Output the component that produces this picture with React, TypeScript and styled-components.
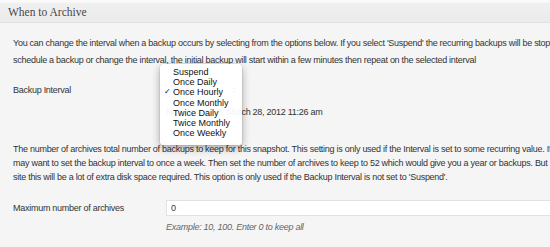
import styled, { createGlobalStyle } from "styled-components";

const GlobalStyle = createGlobalStyle`
  html, body {
    margin: 0;
    padding: 0;
    background: #f5f5f5;
    overflow: hidden;
  }
  body {
    font-family: "Liberation Sans", Arial, sans-serif;
    color: #333;
  }
`;

const intervals = [
  "Suspend",
  "Once Daily",
  "Once Hourly",
  "Once Monthly",
  "Twice Daily",
  "Twice Monthly",
  "Once Weekly",
];

export default function App() {
  const selected = "Once Hourly";

  return (
    <>
      <GlobalStyle />
      <Panel>
        <Header>When to Archive</Header>
        <Body>
          <Intro>
            You can change the interval when a backup occurs by selecting from the options below. If you select
            'Suspend' the recurring backups will be stopped. When you
            <br />
            schedule a backup or change the interval, the initial backup will start within a few minutes then
            repeat on the selected interval
          </Intro>

          <IntervalRow>
            <Label>Backup Interval</Label>
            <Field>
              <SelectBox>
                <span>Once Hourly</span>
                <Stepper viewBox="0 0 6 10">
                  <path d="M1 4 L3 1.5 L5 4 Z M1 6 L3 8.5 L5 6 Z" fill="#888" />
                </Stepper>
              </SelectBox>
              <Menu>
                {intervals.map((name) => (
                  <MenuItem key={name} $checked={name === selected}>
                    {name}
                  </MenuItem>
                ))}
              </Menu>
              <NextRun>Next backup at: March 28, 2012 11:26 am</NextRun>
            </Field>
          </IntervalRow>

          <Note>
            The number of archives total number of backups to keep for this snapshot. This setting is only used if
            the Interval is set to some recurring value. If you
            <br />
            may want to set the backup interval to once a week. Then set the number of archives to keep to 52 which
            would give you a year or backups. But if you have a large
            <br />
            site this will be a lot of extra disk space required. This option is only used if the Backup Interval is
            not set to 'Suspend'.
          </Note>

          <FieldRow>
            <Label>Maximum number of archives</Label>
            <Field>
              <Input defaultValue="0" />
              <Hint>Example: 10, 100. Enter 0 to keep all</Hint>
            </Field>
          </FieldRow>
        </Body>
      </Panel>
    </>
  );
}

const Panel = styled.div`
  width: 700px;
  border-top: 2px solid #fafafa;
`;

const Header = styled.h3`
  margin: 0;
  height: 20px;
  padding: 0 8px;
  line-height: 20px;
  font-family: "Liberation Serif", "Times New Roman", serif;
  font-size: 11.5px;
  font-weight: normal;
  color: #464646;
  background: linear-gradient(#f0f0f0, #ebebeb);
  border-bottom: 1px solid #e2e2e2;
  box-shadow: inset 0 1px 0 #f7f7f7;
`;

const Body = styled.div`
  padding: 12px 13px 0;
`;

const Intro = styled.p`
  margin: 0;
  font-size: 9px;
  letter-spacing: -0.27px;
  line-height: 17px;
  white-space: nowrap;
`;

const Note = styled.p`
  margin: 24px 0 0;
  font-size: 9px;
  letter-spacing: -0.27px;
  line-height: 14px;
  white-space: nowrap;
`;

const FieldRow = styled.div`
  display: grid;
  grid-template-columns: 153px 1fr;
  align-items: start;
  margin-top: 16px;
`;

const IntervalRow = styled(FieldRow)`
  margin-top: 13px;
`;

const Label = styled.div`
  font-size: 9px;
  letter-spacing: -0.27px;
  line-height: 16px;
`;

const Field = styled.div`
  position: relative;
  display: flex;
  flex-direction: column;
`;

const SelectBox = styled.div`
  width: 76px;
  height: 15px;
  display: flex;
  align-items: center;
  justify-content: space-between;
  padding: 0 4px 0 6px;
  box-sizing: border-box;
  font-size: 9px;
  color: #444;
  border-radius: 3px;
  background: #fafafa;
  border: 1px solid #e8e8e8;
`;

const Stepper = styled.svg`
  width: 6px;
  height: 10px;
`;

const Menu = styled.ul`
  position: absolute;
  left: -6px;
  top: -18px;
  z-index: 2;
  width: 82px;
  margin: 0;
  padding: 3px 0 7px;
  list-style: none;
  background: rgba(255, 255, 255, 0.94);
  border-radius: 4px;
  box-shadow: 0 3px 9px rgba(0, 0, 0, 0.32), 0 0 0 1px rgba(0, 0, 0, 0.06);
`;

const MenuItem = styled.li<{ $checked: boolean }>`
  position: relative;
  height: 10.2px;
  padding-left: 13px;
  font-size: 9px;
  line-height: 10.2px;
  color: #111;

  &::before {
    content: ${({ $checked }) => ($checked ? '"✓"' : '""')};
    position: absolute;
    left: 4px;
    font-family: "DejaVu Sans", sans-serif;
    font-size: 8px;
  }
`;

const NextRun = styled.div`
  margin-top: 9px;
  font-size: 9px;
  letter-spacing: -0.27px;
  line-height: 12px;
`;

const Input = styled.input`
  width: 420px;
  height: 16px;
  margin: 0;
  padding: 0 4px;
  box-sizing: border-box;
  font-family: "Liberation Sans", Arial, sans-serif;
  font-size: 9px;
  color: #333;
  background: #fff;
  border: 1px solid #e2e2e2;
  outline: none;
`;

const Hint = styled.div`
  margin-top: 5px;
  font-size: 9px;
  font-style: italic;
  letter-spacing: -0.27px;
  line-height: 12px;
  color: #666;
`;
